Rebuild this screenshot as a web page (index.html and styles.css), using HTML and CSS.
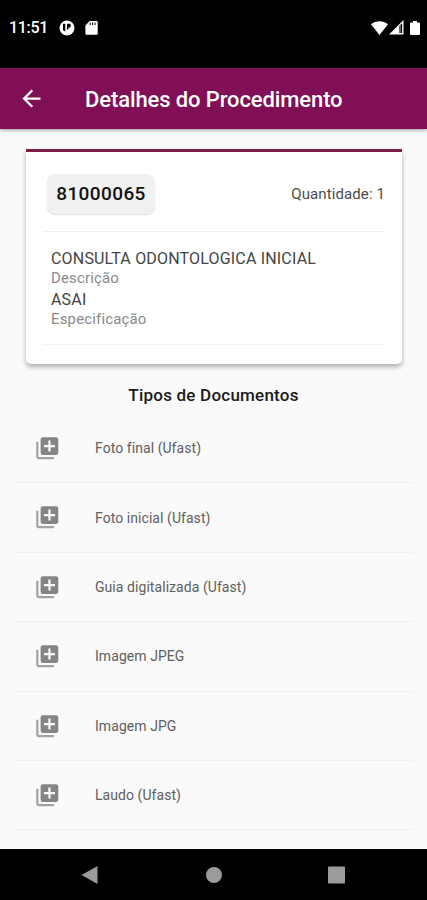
FILE: index.html
```html
<!DOCTYPE html>
<html lang="pt-BR">
<head>
<meta charset="utf-8">
<title>Detalhes do Procedimento</title>
<link rel="stylesheet" href="styles.css">
</head>
<body>
<svg width="0" height="0" class="defs">
  <symbol id="library-add" viewBox="0 0 24 24">
    <path opacity=".75" d="M4 6H2v14c0 1.1.9 2 2 2h14v-2H4V6z"/>
    <path d="M20 2H8c-1.1 0-2 .9-2 2v12c0 1.1.9 2 2 2h12c1.1 0 2-.9 2-2V4c0-1.1-.9-2-2-2zm-1 9h-4v4h-2v-4H9V9h4V5h2v4h4v2z"/>
  </symbol>
</svg>
<div class="screen">
  <div class="status">
    <span class="clock">11:51</span>
    <svg class="app-icon" width="16" height="16" viewBox="0 0 16 16"><circle cx="8" cy="8" r="7.500" fill="#fff"/><path d="M4 3.800h2.300v7.800L4 10.200zM8 3.800h3.200q1.400 1.800 0 3.700H9.500v2H8z"/></svg>
    <svg class="sd-icon" width="13" height="14" viewBox="0 0 13 14"><path d="M4.6 0h7A1.2 1.2 0 0 1 12.700 1.200v11.300a1.200 1.200 0 0 1-1.200 1.200h-10A1.200 1.200 0 0 1 .4 12.500V4.500z" fill="#fff"/><path d="M5.200 1.500v2.600M7.600 1.500v2.600M10 1.500v2.600" stroke="#000" stroke-width="1"/></svg>
    <span class="fill"></span>
    <svg width="17" height="14" viewBox="0 0 17 14"><path d="M0 3.300C5-.9 12-.9 17 3.300L8.500 14z" fill="#fff"/></svg>
    <svg class="signal" width="15" height="15" viewBox="0 0 15 15"><path d="M0 14.500 14.500 0v14.500z" fill="#fff"/><path d="M10.400 5.800v7.300h2.700V3.200z" fill="#000"/><path d="M11.600 5v8.200" stroke="#bbb" stroke-width=".6"/></svg>
    <svg class="battery" width="10" height="14" viewBox="0 0 10 14"><path d="M3 0h4v1.500h2q1 0 1 1V13q0 1-1 1H1q-1 0-1-1V2.500q0-1 1-1h2z" fill="#fff"/></svg>
  </div>
  <header class="appbar">
    <svg class="back" width="27" height="27" viewBox="0 0 24 24"><path d="M20 11H7.830l5.590-5.590L12 4l-8 8 8 8 1.410-1.410L7.830 13H20z" fill="#fff"/></svg>
    <h1>Detalhes do Procedimento</h1>
  </header>
  <main>
    <section class="card">
      <div class="card-top"><span class="chip"><span class="code">81000065</span></span><span class="qty">Quantidade: 1</span></div>
      <dl>
        <dt>CONSULTA ODONTOLOGICA INICIAL</dt><dd>Descrição</dd>
        <dt>ASAI</dt><dd>Especificação</dd>
      </dl>
    </section>
    <h2>Tipos de Documentos</h2>
    <ul>
      <li><svg><use href="#library-add"/></svg><span>Foto final (Ufast)</span></li>
      <li><svg><use href="#library-add"/></svg><span>Foto inicial (Ufast)</span></li>
      <li><svg><use href="#library-add"/></svg><span>Guia digitalizada (Ufast)</span></li>
      <li><svg><use href="#library-add"/></svg><span>Imagem JPEG</span></li>
      <li><svg><use href="#library-add"/></svg><span>Imagem JPG</span></li>
      <li><svg><use href="#library-add"/></svg><span>Laudo (Ufast)</span></li>
    </ul>
  </main>
  <nav>
    <svg width="427" height="51" viewBox="0 0 427 51"><path d="M81.500 26 97.500 17v18z"/><circle cx="214" cy="26" r="8"/><rect x="328" y="17.500" width="17" height="17" rx="1"/></svg>
  </nav>
</div>
</body>
</html>
```
FILE: styles.css
```css
* { box-sizing: border-box; margin: 0; padding: 0; }
body { font-family: Roboto, sans-serif; background: #000; }
.defs { display: block; }
.screen { width: 427px; height: 900px; display: flex; flex-direction: column; overflow: hidden; background: #fafafa; }
svg { flex: none; display: block; }
.status { height: 68px; background: #000; display: flex; align-items: center; padding: 0 7px 13px 9px; flex: none; }
.clock { color: #fff; font-size: 16px; letter-spacing: -.3px; font-weight: 500; width: 50px; white-space: nowrap; }
.sd-icon { margin-left: 10px; }
.fill { flex: 1; }
.signal { margin-left: 1px; }
.battery { margin-left: 6px; }
.appbar { height: 61px; flex: none; background: #800f56; display: flex; align-items: center; padding: 0 0 1px 18px; box-shadow: 0 1px 4px rgba(0,0,0,.4); z-index: 1; }
h1 { color: #fff; font-size: 22px; letter-spacing: -.11px; font-weight: 500; margin: 2px 0 0 40px; white-space: nowrap; }
main { flex: 1; min-height: 0; padding-top: 20px; }
.card { margin: 0 25px 0 26px; height: 215px; background: #fff; border-top: 3px solid #7c1f45; border-radius: 0 0 5px 5px; box-shadow: 0 3px 5px rgba(0,0,0,.3); padding: 0 17px; }
.card-top { height: 80px; display: flex; justify-content: space-between; align-items: center; border-bottom: 1px solid #eee; padding: 4px 0 0 4px; }
.chip { width: 108px; height: 40px; border-radius: 8px; background: #f1f1f1; display: flex; align-items: center; justify-content: center; box-shadow: 0 1px 1px rgba(0,0,0,.13); }
.code { font-size: 19px; font-weight: 500; color: #111; letter-spacing: .4px; }
.qty { font-size: 15px; letter-spacing: .1px; color: #4c4c4c; }
dl { height: 113px; border-bottom: 1px solid #f3f3f3; padding: 17px 0 0 8px; white-space: nowrap; }
dt { font-size: 16px; letter-spacing: .18px; line-height: 20px; color: #444; }
dd { font-size: 15px; letter-spacing: .15px; line-height: 18px; color: #8a8a8a; margin-bottom: 3px; }
h2 { font-size: 17px; letter-spacing: .22px; font-weight: 500; color: #1a1a1a; text-align: center; line-height: 20px; margin-top: 21px; }
ul { list-style: none; margin: 9px 14px 0 16px; }
li { height: 69.400px; display: flex; align-items: center; padding-left: 18px; border-bottom: 1px solid #f0f0f0; }
li svg { width: 26.500px; height: 26.500px; fill: #858585; }
li span { font-size: 14px; letter-spacing: .06px; color: #606060; margin-left: 34.500px; white-space: nowrap; }
nav { height: 51px; background: #000; flex: none; }
nav svg { fill: #9b9b9b; }
```
